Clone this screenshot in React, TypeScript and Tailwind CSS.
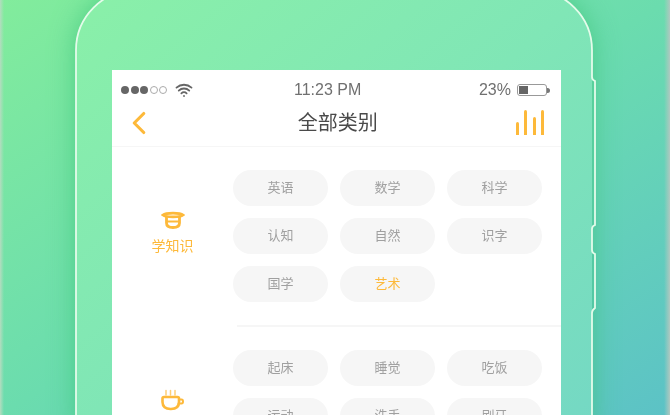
import { ChevronLeft, Wifi } from 'lucide-react';

const CJK = 'font-["Liberation_Sans","Noto_Sans_CJK_SC",sans-serif]';

const Chip = ({ label, active }: { label: string; active?: boolean }) => (
  <div
    className={`h-9 rounded-full bg-[#f6f6f6] flex items-center justify-center text-[13px] ${
      active ? 'text-[#fdb93a]' : 'text-[#a0a0a0]'
    }`}
  >
    {label}
  </div>
);

const CapIcon = () => (
  <svg width="24" height="18" viewBox="0 0 24 18" fill="none" stroke="#fdb93a" strokeWidth="2.8" strokeLinecap="round">
    <path d="M2 4C5 1.500 19 1.500 22 4C19 6.500 5 6.500 2 4Z" />
    <path d="M5.500 6V12C5.500 15 8 16.500 12 16.500C16 16.500 18.500 15 18.500 12V6" />
    <path d="M6.500 10.500H17.500" strokeWidth="2.200" />
  </svg>
);

const CupIcon = () => (
  <svg width="24" height="22" viewBox="0 0 24 22" fill="none" stroke="#fdb93a" strokeWidth="2.600" strokeLinecap="round">
    <path d="M5 1.500V6M9.500 1.500V6M14 1.500V6" strokeWidth="1.500" opacity="0.7" />
    <path d="M1.500 9.500C1.500 8.500 2 8 3 8H16.500C17.500 8 18 8.500 18 9.500V13C18 17.500 15 20 10 20H9.500C4.500 20 1.500 17.500 1.500 13Z" />
    <path d="M18 10.500H20.500C22.500 10.500 22.500 14.500 20.500 14.500H17.500" strokeWidth="2" />
  </svg>
);

const Bars = () => (
  <div className="flex items-end gap-[5.5px] h-[26px]">
    {[13, 25, 18, 25].map((h, i) => (
      <div key={i} className="w-[3px] rounded-t-sm bg-[#fdb93a]" style={{ height: h }} />
    ))}
  </div>
);

export default function App() {
  return (
    <div
      className={`relative w-[670px] h-[415px] overflow-hidden bg-gradient-to-br from-[#82ec9c] via-[#6bdcae] to-[#5cc2c6] ${CJK}`}
    >
      {/* phone body */}
      <div className="ml-[76px] mt-[-10px] w-[516px] h-[440px] rounded-t-[60px] pt-[80px] pl-[36px] bg-gradient-to-br from-[#8af0a8] via-[#80e6b6] to-[#74d8c4] shadow-[0_0_26px_rgba(60,195,120,0.75)]">
        {/* screen */}
        <div className="w-[449px] h-[360px] bg-white">
          <div className="blur-[0.6px]">
            {/* status bar */}
            <div className="h-[35px] flex items-center pt-[5px] text-[16px] text-[#707070]">
              <div className="w-[182px] flex items-center pl-[9px] gap-[8px]">
                <div className="flex gap-[1.5px]">
                  {[0, 1, 2].map(i => (
                    <div key={i} className="w-2 h-2 rounded-full bg-[#666]" />
                  ))}
                  {[3, 4].map(i => (
                    <div key={i} className="w-2 h-2 rounded-full border border-[#aaa]" />
                  ))}
                </div>
                <Wifi size={18} strokeWidth={2.4} color="#666" />
              </div>
              <span>11:23 PM</span>
              <div className="flex-1 flex items-center justify-end pr-[11px] gap-[6px]">
                <span>23%</span>
                <div className="flex items-center">
                  <div className="w-[30px] h-[12px] rounded-[3px] border border-[#999] p-[1px]">
                    <div className="w-[9px] h-full bg-[#666]" />
                  </div>
                  <div className="w-[3px] h-[5px] rounded-r-sm bg-[#777]" />
                </div>
              </div>
            </div>
            {/* nav */}
            <div className="h-[42px] flex items-center justify-between border-b border-[#f6f6f6] pl-[16px] pr-[17px]">
              <ChevronLeft size={38} strokeWidth={2} color="#fdb93a" className="ml-[-8px] mb-[6px]" />
              <span className="text-[20px] text-[#4a4a4a] ml-[2px] mb-[6px]">全部类别</span>
              <div className="mb-[8px]">
                <Bars />
              </div>
            </div>
            {/* first group */}
            <div className="flex pt-[23px] pb-[23px]">
              <div className="w-[121px] flex flex-col items-center justify-center gap-[9px] pb-[8px]">
                <CapIcon />
                <span className="text-[14px] leading-[16px] text-[#fdb93a]">学知识</span>
              </div>
              <div className="w-[309px] grid grid-cols-3 gap-x-3 gap-y-3">
                <Chip label="英语" />
                <Chip label="数学" />
                <Chip label="科学" />
                <Chip label="认知" />
                <Chip label="自然" />
                <Chip label="识字" />
                <Chip label="国学" />
                <Chip label="艺术" active />
              </div>
            </div>
            <div className="ml-[125px] h-[2px] bg-[#f6f6f6]" />
            {/* second group */}
            <div className="flex pt-[23px]">
              <div className="w-[121px] flex justify-center pt-[39px]">
                <CupIcon />
              </div>
              <div className="w-[309px] grid grid-cols-3 gap-x-3 gap-y-3">
                <Chip label="起床" />
                <Chip label="睡觉" />
                <Chip label="吃饭" />
                <Chip label="运动" />
                <Chip label="洗手" />
                <Chip label="刷牙" />
              </div>
            </div>
          </div>
        </div>
      </div>
      {/* pale strips on the picture's edges */}
      <div className="absolute left-0 top-0 h-full w-[4px] bg-gradient-to-r from-[#b4dcc0] to-transparent" />
      <div className="absolute right-0 top-0 h-full w-[6px] bg-gradient-to-l from-[#b0c8c0] to-transparent" />
      {/* phone outline with side buttons */}
      <svg className="absolute inset-0" width="670" height="415" fill="none" stroke="#e4fbea" strokeWidth="1.8">
        <path d="M76 420V50A60 60 0 0 1 136 -10H532A60 60 0 0 1 592 50V77Q592 80 595 81V225Q592 226 592 229V250Q592 253 595 254V308Q592 310 592 313V420" />
      </svg>
    </div>
  );
}
